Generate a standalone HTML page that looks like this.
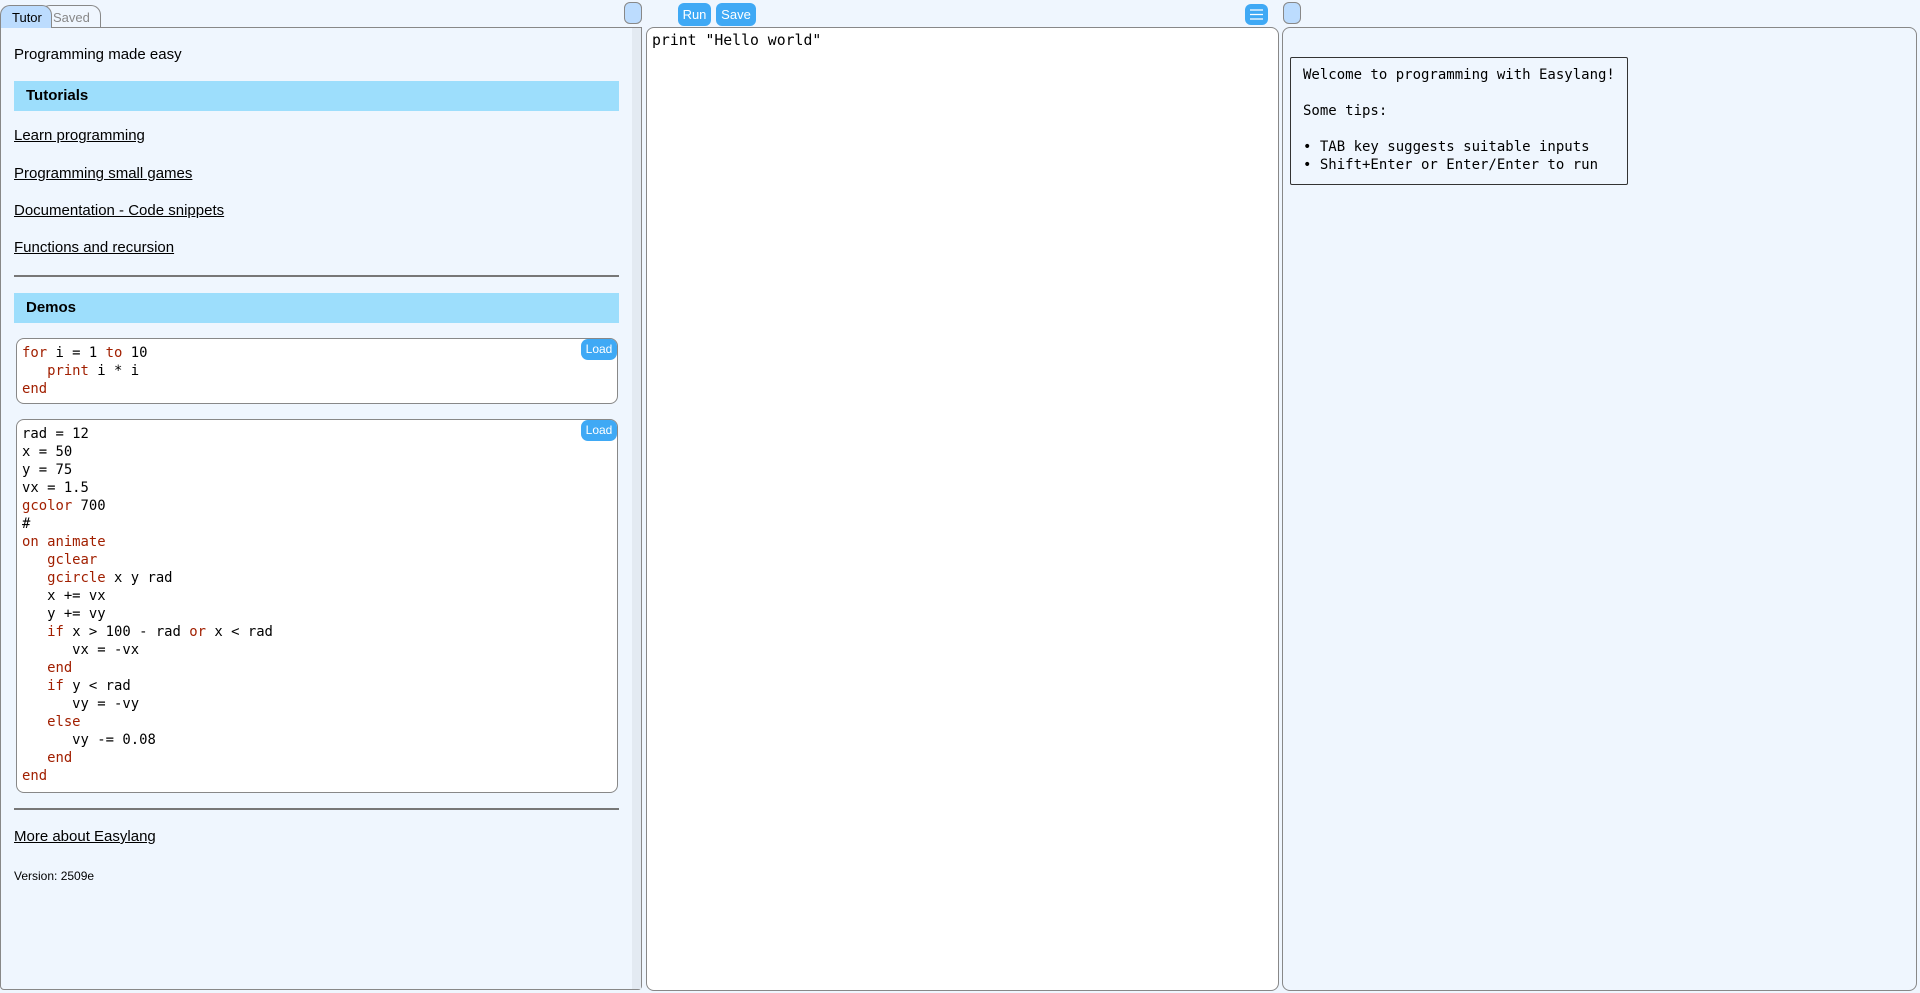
<!DOCTYPE html>
<html><head><meta charset="utf-8"><style>
*{box-sizing:border-box}
body{margin:0;width:1920px;height:993px;background:#eff6fe;font-family:"Liberation Sans",sans-serif;position:relative;overflow:hidden;color:#000}
.abs{position:absolute}
.tab{position:absolute;top:5px;height:23px;border:1px solid #888;border-bottom:none;border-radius:10px 10px 0 0;font-size:13px;line-height:23px;padding:0 9px}
.left{left:0;top:27px;width:642px;height:963px;border:1px solid #888;background:#eff6fe;border-radius:0 0 4px 4px}
.sb{position:absolute;left:631px;top:0;width:9px;height:100%;background:#e3eaf2}
.bar{position:absolute;left:13px;width:605px;height:30px;background:#9ddefc;font-weight:bold;font-size:15px;line-height:30px;padding-left:12px}
.lnk{position:absolute;left:13px;font-size:15px;text-decoration:underline}
.hr{position:absolute;left:13px;width:605px;height:2px;background:#777}
.code{position:absolute;left:15px;width:602px;background:#fff;border:1px solid #888;border-radius:8px;font-family:"DejaVu Sans Mono","Liberation Mono",monospace;font-size:13.9px;line-height:18px;padding:5px 5px;white-space:pre;margin:0}
.k{color:#a11f00}
.btn{position:absolute;background:#3fa9f5;color:#fff;border-radius:6px;font-size:13px;text-align:center}
.load{right:0;top:0;width:36px;height:21px;line-height:21px;font-size:12px;border-radius:7px;font-family:"Liberation Sans",sans-serif}
.grip{position:absolute;top:2px;width:18px;height:22px;background:#bcdcfe;border:1px solid #888;border-radius:6px}
</style></head><body>
<div class="tab" style="left:0;width:52px;background:#bcdcfe;z-index:2;padding:0 11px">Tutor</div>
<div class="tab" style="left:40px;width:61px;color:#888;padding-left:12px">Saved</div>
<div class="grip" style="left:624px"></div>
<div class="grip" style="left:1283px"></div>
<div class="btn" style="left:678px;top:3px;width:33px;height:23px;line-height:23px">Run</div>
<div class="btn" style="left:716px;top:3px;width:40px;height:23px;line-height:23px">Save</div>
<div class="btn" style="left:1245px;top:4px;width:23px;height:21px"><svg width="23" height="21"><path d="M5 6h13M5 10.5h13M5 15h13" stroke="#fff" stroke-width="1.3"/></svg></div>

<div class="abs left">
 <div class="sb"></div>
 <div class="abs" style="left:13px;top:18px;font-size:15px">Programming made easy</div>
 <div class="bar" style="top:53px">Tutorials</div>
 <div class="lnk" style="top:99px">Learn programming</div>
 <div class="lnk" style="top:137px">Programming small games</div>
 <div class="lnk" style="top:174px">Documentation - Code snippets</div>
 <div class="lnk" style="top:211px">Functions and recursion</div>
 <div class="hr" style="top:247px"></div>
 <div class="bar" style="top:265px">Demos</div>
<pre class="code" style="top:310px;height:66px"><span class="btn load">Load</span><span class="k">for</span> i = 1 <span class="k">to</span> 10
   <span class="k">print</span> i * i
<span class="k">end</span></pre>
<pre class="code" style="top:391px;height:374px"><span class="btn load">Load</span>rad = 12
x = 50
y = 75
vx = 1.5
<span class="k">gcolor</span> 700
#
<span class="k">on animate</span>
   <span class="k">gclear</span>
   <span class="k">gcircle</span> x y rad
   x += vx
   y += vy
   <span class="k">if</span> x &gt; 100 - rad <span class="k">or</span> x &lt; rad
      vx = -vx
   <span class="k">end</span>
   <span class="k">if</span> y &lt; rad
      vy = -vy
   <span class="k">else</span>
      vy -= 0.08
   <span class="k">end</span>
<span class="k">end</span></pre>
 <div class="hr" style="top:780px"></div>
 <div class="lnk" style="top:800px">More about Easylang</div>
 <div class="abs" style="left:13px;top:841px;font-size:12px">Version: 2509e</div>
</div>

<div class="abs" style="left:646px;top:27px;width:633px;height:964px;background:#fff;border:1px solid #888;border-radius:8px;font-family:'DejaVu Sans Mono',monospace;font-size:14.8px;padding:4px 5px;white-space:pre">print "Hello world"</div>

<div class="abs" style="left:1282px;top:27px;width:635px;height:964px;background:#eff6fe;border:1px solid #888;border-radius:8px">
 <div class="abs" style="left:7px;top:29px;width:338px;height:128px;border:1.5px solid #333;border-radius:2px;font-family:'DejaVu Sans Mono',monospace;font-size:14px;line-height:18px;padding:8px 12px;white-space:pre">Welcome to programming with Easylang!

Some tips:

• TAB key suggests suitable inputs
• Shift+Enter or Enter/Enter to run</div>
</div>
</body></html>
